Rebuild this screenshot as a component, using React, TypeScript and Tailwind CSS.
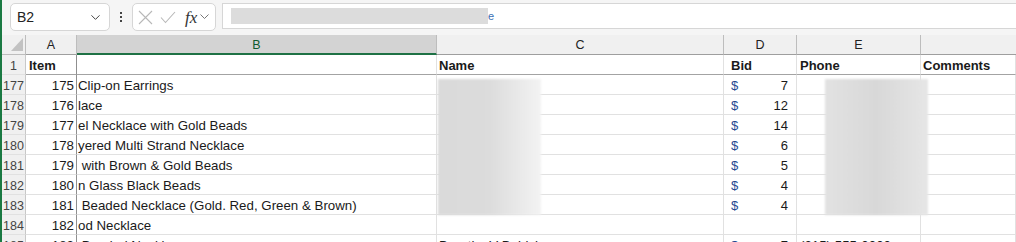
import { ChevronDown } from 'lucide-react';

const rows = [
  { n: 177, a: 175, b: 'Clip-on Earrings', d: '7' },
  { n: 178, a: 176, b: 'lace', d: '12' },
  { n: 179, a: 177, b: 'el Necklace with Gold Beads', d: '14' },
  { n: 180, a: 178, b: 'yered Multi Strand Necklace', d: '6' },
  { n: 181, a: 179, b: '\u00a0with Brown & Gold Beads', d: '5' },
  { n: 182, a: 180, b: 'n Glass Black Beads', d: '4' },
  { n: 183, a: 181, b: '\u00a0Beaded Necklace (Gold. Red, Green & Brown)', d: '4' },
  { n: 184, a: 182, b: 'od Necklace', d: '' },
  { n: 185, a: 183, b: '\u00a0Beaded Necklace', c: 'Dorothy V Babich', d: '7', e: '(215) 555-0000' }
];

const cell = 'h-[20px] shrink-0 overflow-hidden whitespace-nowrap border-b border-r border-[#e1e1e1] leading-[22px]';

export default function App() {
  return (
    <div className="relative h-[242px] w-[1016px] overflow-hidden border-l-2 border-[#1b7a43] bg-white font-['Liberation_Sans',Arial,sans-serif] text-[13.3px] text-[#1a1a1a]">
      {/* formula bar */}
      <div className="flex h-[35px] items-start bg-[#f5f5f5] pt-[3px]">
        <div className="ml-[8px] flex h-[28px] w-[100px] items-center justify-between rounded-[5px] border border-[#d6d6d6] bg-white pl-[6px] pr-[6px] text-[14px] text-[#222]">
          <span>B2</span>
          <ChevronDown size={15} strokeWidth={1.6} className="text-[#444]" />
        </div>
        <div className="flex h-[28px] w-[22px] flex-col items-center justify-center gap-[2px]">
          <span className="h-[2px] w-[2px] bg-[#444]" />
          <span className="h-[2px] w-[2px] bg-[#444]" />
          <span className="h-[2px] w-[2px] bg-[#444]" />
        </div>
        <div className="flex h-[28px] w-[84px] items-center rounded-[5px] border border-[#d6d6d6] bg-white pl-[5px]">
          <svg width="15" height="15" viewBox="0 0 15 15" className="text-[#b8b8b8]"><path d="M1 1L14 14M14 1L1 14" stroke="currentColor" strokeWidth="1.1" fill="none" /></svg>
          <svg width="16" height="13" viewBox="0 0 16 13" className="ml-[7px] text-[#b8b8b8]"><path d="M1 6.5L5.5 11.5L15 1" stroke="currentColor" strokeWidth="1.1" fill="none" /></svg>
          <span className="ml-[9px] font-['Liberation_Serif',serif] text-[17px] italic leading-none text-[#333]">fx</span>
          <svg width="9" height="6" viewBox="0 0 9 6" className="ml-[3px] text-[#777]"><path d="M0.5 0.5L4.5 4.5L8.5 0.5" stroke="currentColor" strokeWidth="1" fill="none" /></svg>
        </div>
        <div className="ml-[6px] flex h-[26px] flex-1 items-center border border-r-0 border-[#d6d6d6] bg-white pl-[8px]">
          <div className="h-[16px] w-[257px] bg-[#dcdcdc]" />
          <span className="text-[11px] leading-none text-[#3a6fb5]">e</span>
        </div>
      </div>

      {/* column headers */}
      <div className="flex h-[20px] bg-[#f0f0f0] text-[12.5px] text-[#222]">
        <div className="relative h-[20px] w-[24px] shrink-0 border-b border-r border-[#bdbdbd]">
          <div className="absolute bottom-[3px] right-[2px] h-0 w-0 border-b-[13px] border-l-[12px] border-b-[#c2c2c2] border-l-transparent" />
        </div>
        <div className="flex h-[20px] w-[51px] shrink-0 items-center justify-center border-b border-r border-b-[#9e9e9e] border-r-[#bdbdbd] pt-[2px]">A</div>
        <div className="flex h-[20px] w-[360px] shrink-0 items-center justify-center border-b-2 border-r border-b-[#1e7145] border-r-[#bdbdbd] bg-[#d3d3d3] pt-[3px] text-[#0f5a2e]">B</div>
        <div className="flex h-[20px] w-[287px] shrink-0 items-center justify-center border-b border-r border-b-[#9e9e9e] border-r-[#bdbdbd] pt-[2px]">C</div>
        <div className="flex h-[20px] w-[73px] shrink-0 items-center justify-center border-b border-r border-b-[#9e9e9e] border-r-[#bdbdbd] pt-[2px]">D</div>
        <div className="flex h-[20px] w-[124px] shrink-0 items-center justify-center border-b border-r border-b-[#9e9e9e] border-r-[#bdbdbd] pt-[2px]">E</div>
        <div className="h-[20px] flex-1 border-b border-[#9e9e9e]" />
      </div>

      {/* header row 1 */}
      <div className="flex text-[13px] font-bold">
        <div className={`${cell} w-[24px] border-r-[#c8c8c8] bg-[#f0f0f0] text-center text-[12.5px] font-normal text-[#444]`}>1</div>
        <div className={`${cell} w-[51px] border-b-[#a3a3a3] border-r-[#8f8f8f] pl-[3px]`}>Item</div>
        <div className={`${cell} w-[360px] border-b-[#a3a3a3]`} />
        <div className={`${cell} w-[287px] border-b-[#a3a3a3] pl-[2px]`}>Name</div>
        <div className={`${cell} w-[73px] border-b-[#a3a3a3] pl-[7px]`}>Bid</div>
        <div className={`${cell} w-[124px] border-b-[#a3a3a3] pl-[3px]`}>Phone</div>
        <div className={`${cell} flex-1 border-b-[#a3a3a3] pl-[2px]`}>Comments</div>
      </div>

      {rows.map((r) => (
        <div key={r.n} className="flex">
          <div className={`${cell} w-[24px] border-r-[#c8c8c8] bg-[#f0f0f0] text-center text-[12.5px] text-[#444]`}>{r.n}</div>
          <div className={`${cell} w-[51px] border-r-[#8f8f8f] pr-[2px] text-right`}>{r.a}</div>
          <div className={`${cell} w-[360px] pl-[1px]`}>{r.b}</div>
          <div className={`${cell} w-[287px] pl-[2px]`}>{r.c ?? ''}</div>
          <div className={`${cell} flex w-[73px] justify-between pl-[7px] pr-[8px] text-[13px]`}>
            {r.d && <><span className="text-[#234a91]">$</span><span>{r.d}</span></>}
          </div>
          <div className={`${cell} w-[124px] pl-[3px]`}>{r.e ?? ''}</div>
          <div className={`${cell} flex-1`} />
        </div>
      ))}

      {/* redacted blocks */}
      <div className="absolute left-[436px] top-[79px] h-[136px] w-[103px] bg-gradient-to-r from-[#dadada] via-[#dcdcdc] to-[#f3f3f3] blur-[1px]" />
      <div className="absolute left-[823px] top-[79px] h-[136px] w-[103px] bg-gradient-to-r from-[#e2e2e2] via-[#d8d8d8] to-[#e6e6e6] blur-[1px]" />
    </div>
  );
}
